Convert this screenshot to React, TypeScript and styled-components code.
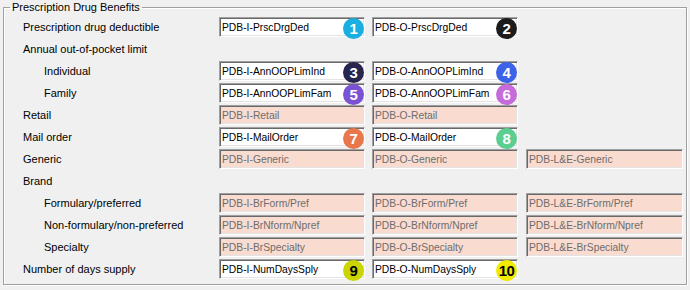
import { FC } from 'react'
import styled, { createGlobalStyle } from 'styled-components'

const GlobalStyle = createGlobalStyle`
    html, body {
        margin:0;
        padding:0;
        background:#f0f0f0;
    }
    body {
        width:690px;
        height:290px;
        overflow:hidden;
        font-family:"Liberation Sans", Arial, sans-serif;
        font-size:11px;
        color:#000;
    }
`;

const Page = styled.div`
    padding:1px 3px 0 3px;
`;

const GroupBox = styled.fieldset`
    margin:0;
    padding:9px 0 0 0;
    width:684px;
    height:284px;
    box-sizing:border-box;
    border:1px solid #a0a0a0;
    box-shadow:inset 1px 1px #fff, 1px 1px #fff;
    min-width:0;
`;

const Legend = styled.legend`
    margin-left:6px;
    padding:0 2px 0 2px;
    font-size:11px;
    line-height:13px;
`;

const Grid = styled.div`
    display:grid;
    grid-template-columns:215px 153px 154px 157px;
    grid-auto-rows:22px;
    margin-top:-6px;
`;

const Label = styled.div<{ $indent?: boolean }>`
    padding-left:${p => p.$indent ? 40 : 19}px;
    line-height:21px;
    white-space:nowrap;
`;

const Box = styled.div<{ $disabled?: boolean; $wide?: boolean }>`
    position:relative;
    width:${p => p.$wide ? 157 : 146}px;
    height:20px;
    box-sizing:border-box;
    border-top:1px solid #a0a0a0;
    border-left:1px solid #a0a0a0;
    border-right:1px solid #fff;
    border-bottom:1px solid #fff;
    box-shadow:inset 1px 1px #696969, inset -1px -1px #e3e3e3;
    background:${p => p.$disabled ? '#f9dbd0' : '#fff'};
    color:${p => p.$disabled ? '#6d6d6d' : '#000'};
    padding:0 0 0 2px;
    font-size:10.3px;
    line-height:19px;
    white-space:nowrap;
    overflow:visible;
`;

const Badge = styled.span<{ $bg: string; $dark?: boolean }>`
    position:absolute;
    right:0px;
    top:0px;
    width:21px;
    height:21px;
    border-radius:50%;
    background:${p => p.$bg};
    color:${p => p.$dark ? '#000' : '#fff'};
    font-family:"Liberation Sans", Arial, sans-serif;
    font-weight:bold;
    font-size:15px;
    line-height:21px;
    text-align:center;
    letter-spacing:-0.5px;
`;

type Field = {
    text: string
    disabled?: boolean
    badge?: { n: number; bg: string; dark?: boolean }
}

type Row = {
    label: string
    indent?: boolean
    fields: (Field | null)[]
}

const rows: Row[] = [
    {
        label: 'Prescription drug deductible',
        fields: [
            { text: 'PDB-I-PrscDrgDed', badge: { n: 1, bg: '#1aaee2' } },
            { text: 'PDB-O-PrscDrgDed', badge: { n: 2, bg: '#1c1c1c' } },
        ]
    },
    { label: 'Annual out-of-pocket limit', fields: [] },
    {
        label: 'Individual', indent: true,
        fields: [
            { text: 'PDB-I-AnnOOPLimInd', badge: { n: 3, bg: '#27244e' } },
            { text: 'PDB-O-AnnOOPLimInd', badge: { n: 4, bg: '#3c62ea' } },
        ]
    },
    {
        label: 'Family', indent: true,
        fields: [
            { text: 'PDB-I-AnnOOPLimFam', badge: { n: 5, bg: '#7b52d3' } },
            { text: 'PDB-O-AnnOOPLimFam', badge: { n: 6, bg: '#c66cda' } },
        ]
    },
    {
        label: 'Retail',
        fields: [
            { text: 'PDB-I-Retail', disabled: true },
            { text: 'PDB-O-Retail', disabled: true },
        ]
    },
    {
        label: 'Mail order',
        fields: [
            { text: 'PDB-I-MailOrder', badge: { n: 7, bg: '#e8774c' } },
            { text: 'PDB-O-MailOrder', badge: { n: 8, bg: '#5ccf90' } },
        ]
    },
    {
        label: 'Generic',
        fields: [
            { text: 'PDB-I-Generic', disabled: true },
            { text: 'PDB-O-Generic', disabled: true },
            { text: 'PDB-L&E-Generic', disabled: true },
        ]
    },
    { label: 'Brand', fields: [] },
    {
        label: 'Formulary/preferred', indent: true,
        fields: [
            { text: 'PDB-I-BrForm/Pref', disabled: true },
            { text: 'PDB-O-BrForm/Pref', disabled: true },
            { text: 'PDB-L&E-BrForm/Pref', disabled: true },
        ]
    },
    {
        label: 'Non-formulary/non-preferred', indent: true,
        fields: [
            { text: 'PDB-I-BrNform/Npref', disabled: true },
            { text: 'PDB-O-BrNform/Npref', disabled: true },
            { text: 'PDB-L&E-BrNform/Npref', disabled: true },
        ]
    },
    {
        label: 'Specialty', indent: true,
        fields: [
            { text: 'PDB-I-BrSpecialty', disabled: true },
            { text: 'PDB-O-BrSpecialty', disabled: true },
            { text: 'PDB-L&E-BrSpecialty', disabled: true },
        ]
    },
    {
        label: 'Number of days supply',
        fields: [
            { text: 'PDB-I-NumDaysSply', badge: { n: 9, bg: '#cbd600', dark: true } },
            { text: 'PDB-O-NumDaysSply', badge: { n: 10, bg: '#f2ea00', dark: true } },
        ]
    },
]

const FieldCell: FC<{ field: Field | null; col: number }> = ({ field, col }) => {
    if (!field) return <div />
    return (
        <div>
            <Box $disabled={field.disabled} $wide={col === 2}>
                {field.text}
                {field.badge && (
                    <Badge $bg={field.badge.bg} $dark={field.badge.dark}>{field.badge.n}</Badge>
                )}
            </Box>
        </div>
    )
}

const App: FC = () => {
    return (
        <Page>
            <GlobalStyle />
            <GroupBox>
                <Legend>Prescription Drug Benefits</Legend>
                <Grid>
                    {rows.map((row, i) => (
                        <div key={i} style={{ display: 'contents' }}>
                            <Label $indent={row.indent}>{row.label}</Label>
                            {[0, 1, 2].map(c => (
                                <FieldCell key={c} col={c} field={row.fields[c] ?? null} />
                            ))}
                        </div>
                    ))}
                </Grid>
            </GroupBox>
        </Page>
    )
}

export default App
